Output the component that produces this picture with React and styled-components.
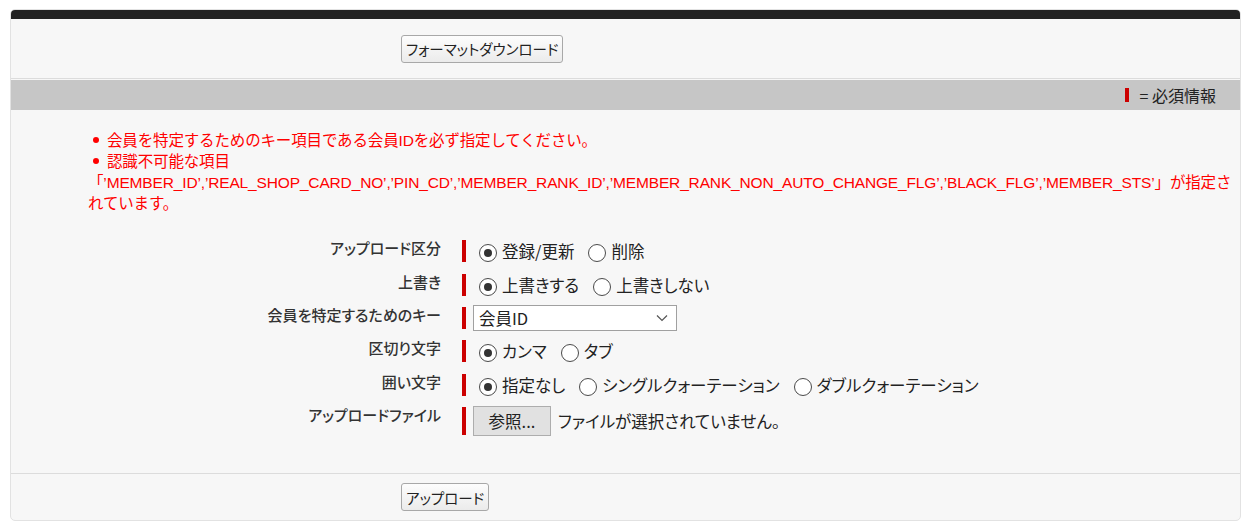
import React from "react";
import styled, { createGlobalStyle } from "styled-components";

// styled [start]
const GlobalStyle = createGlobalStyle`
	body {
		margin: 0;
		background: #fff;
		font-family: "Liberation Sans", "Noto Sans CJK JP", sans-serif;
		color: #222;
	}
`;

const Panel = styled("div")`
	margin: 9px 10px 10px 10px;
	border: 1px solid #e2e2e2;
	border-radius: 5px;
	background: #f7f7f7;
	overflow: hidden;
`;

const HeadBar = styled("div")`
	height: 9px;
	background: #222;
`;

const ActionBar = styled("div")`
	display: flex;
	align-items: center;
	height: ${(p) => p.$height}px;
	padding-left: 390px;
	border-top: ${(p) => (p.$top ? "1px solid #dcdcdc" : "0")};
	border-bottom: ${(p) => (p.$top ? "0" : "1px solid #dcdcdc")};
`;

const PlainButton = styled("button")`
	height: 28px;
	padding: 0 4px;
	border: 1px solid #a8a8a8;
	border-radius: 3px;
	background: linear-gradient(#fdfdfd, #ebebeb);
	font-family: "Noto Sans CJK JP", sans-serif;
	font-feature-settings: "palt";
	font-size: 14.5px;
	color: #222;
`;

const RequiredBar = styled("div")`
	display: flex;
	align-items: center;
	justify-content: flex-end;
	gap: 11px;
	height: 30px;
	margin-top: 1px;
	padding-right: 24px;
	background: #c6c6c6;
	font-family: "Noto Sans CJK JP", sans-serif;
	font-size: 16px;
	color: #222;
`;

const Mark = styled("span")`
	display: inline-block;
	width: 4px;
	height: ${(p) => p.$h}px;
	background: #cc0000;
`;

const Messages = styled("ul")`
	margin: 0;
	padding: 20px 4px 0 77px;
	list-style: none;
	color: #ff0000;
	font-size: 15.5px;
	line-height: 21px;
	letter-spacing: -0.15px;
`;

const MessageItem = styled("li")`
	&::before {
		content: "";
		display: inline-block;
		width: 6px;
		height: 6px;
		margin: 0 8px 3px 5px;
		border-radius: 50%;
		background: #ff0000;
		vertical-align: middle;
	}
`;

const Form = styled("div")`
	padding: 20px 0 33px;
`;

const Row = styled("div")`
	display: flex;
	align-items: center;
	height: ${(p) => p.$height || 34}px;
`;

const Label = styled("div")`
	align-self: flex-start;
	width: 430px;
	margin-right: 21px;
	padding-top: ${(p) => p.$top || 3}px;
	text-align: right;
	font-family: "Noto Sans CJK JP", sans-serif;
	font-feature-settings: "palt";
	font-size: 15px;
	font-weight: 500;
	color: #333;
`;

const Control = styled("div")`
	display: flex;
	align-items: center;
	margin-left: 7px;
	font-family: "Noto Sans CJK JP", sans-serif;
	font-feature-settings: "palt";
	font-size: 16.5px;
	color: #222;
`;

const RadioItem = styled("label")`
	display: flex;
	align-items: center;
	margin-right: 8px;
`;

const RadioCircle = styled("span")`
	position: relative;
	width: 18px;
	height: 18px;
	margin: 3px 5px 0 6px;
	border: 1px solid #4a4a4a;
	border-radius: 50%;
	background: #fff;
	box-sizing: border-box;

	&::after {
		content: "";
		display: ${(p) => (p.$checked ? "block" : "none")};
		position: absolute;
		left: 4px;
		top: 4px;
		width: 8px;
		height: 8px;
		border-radius: 50%;
		background: #333;
	}
`;

const SelectBox = styled("div")`
	display: flex;
	align-items: center;
	justify-content: space-between;
	width: 204px;
	height: 26px;
	padding: 0 8px 0 5px;
	border: 1px solid #a0a0a0;
	background: #fff;
	box-sizing: border-box;
`;

const FileButton = styled("span")`
	display: flex;
	align-items: center;
	justify-content: center;
	width: 78px;
	height: 30px;
	border: 1px solid #adadad;
	background: #e1e1e1;
	box-sizing: border-box;
`;

const FileText = styled("span")`
	margin-left: 7px;
`;
// styled [end]

const RadioList = [
	{ label: "アップロード区分", options: ["登録/更新", "削除"] },
	{ label: "上書き", options: ["上書きする", "上書きしない"] },
];

const RadioList2 = [
	{ label: "区切り文字", options: ["カンマ", "タブ"] },
	{ label: "囲い文字", options: ["指定なし", "シングルクォーテーション", "ダブルクォーテーション"] },
];

function RadioRow({ label, options }) {
	return (
		<Row>
			<Label>{label}</Label>
			<Mark $h={22} />
			<Control>
				{options.map((item, index) => (
					<RadioItem key={index}>
						<RadioCircle $checked={index === 0} />
						{item}
					</RadioItem>
				))}
			</Control>
		</Row>
	);
}

function App() {
	return (
		<>
			<GlobalStyle />
			<Panel>
				<HeadBar />
				<ActionBar $height={59}>
					<PlainButton>フォーマットダウンロード</PlainButton>
				</ActionBar>
				<RequiredBar>
					<Mark $h={14} />
					<span>= 必須情報</span>
				</RequiredBar>

				<Messages>
					<MessageItem>会員を特定するためのキー項目である会員IDを必ず指定してください。</MessageItem>
					<MessageItem>
						認識不可能な項目
						<br />
						「’MEMBER_ID’,’REAL_SHOP_CARD_NO’,’PIN_CD’,’MEMBER_RANK_ID’,’MEMBER_RANK_NON_AUTO_CHANGE_FLG’,’BLACK_FLG’,’MEMBER_STS’」が指定されています。
					</MessageItem>
				</Messages>

				<Form>
					{RadioList.map((item, index) => (
						<RadioRow key={index} label={item.label} options={item.options} />
					))}
					<Row $height={32}>
						<Label $top={2}>会員を特定するためのキー</Label>
						<Mark $h={22} />
						<Control>
							<SelectBox>
								<span>会員ID</span>
								<svg width="12" height="8" viewBox="0 0 12 8">
									<polyline points="1,1.5 6,6.5 11,1.5" fill="none" stroke="#555" strokeWidth="1.2" />
								</svg>
							</SelectBox>
						</Control>
					</Row>
					{RadioList2.map((item, index) => (
						<RadioRow key={index} label={item.label} options={item.options} />
					))}
					<Row $height={38}>
						<Label $top={2}>アップロードファイル</Label>
						<Mark $h={28} />
						<Control>
							<FileButton>参照...</FileButton>
							<FileText>ファイルが選択されていません。</FileText>
						</Control>
					</Row>
				</Form>

				<ActionBar $height={46} $top>
					<PlainButton>アップロード</PlainButton>
				</ActionBar>
			</Panel>
		</>
	);
}

export default App;
